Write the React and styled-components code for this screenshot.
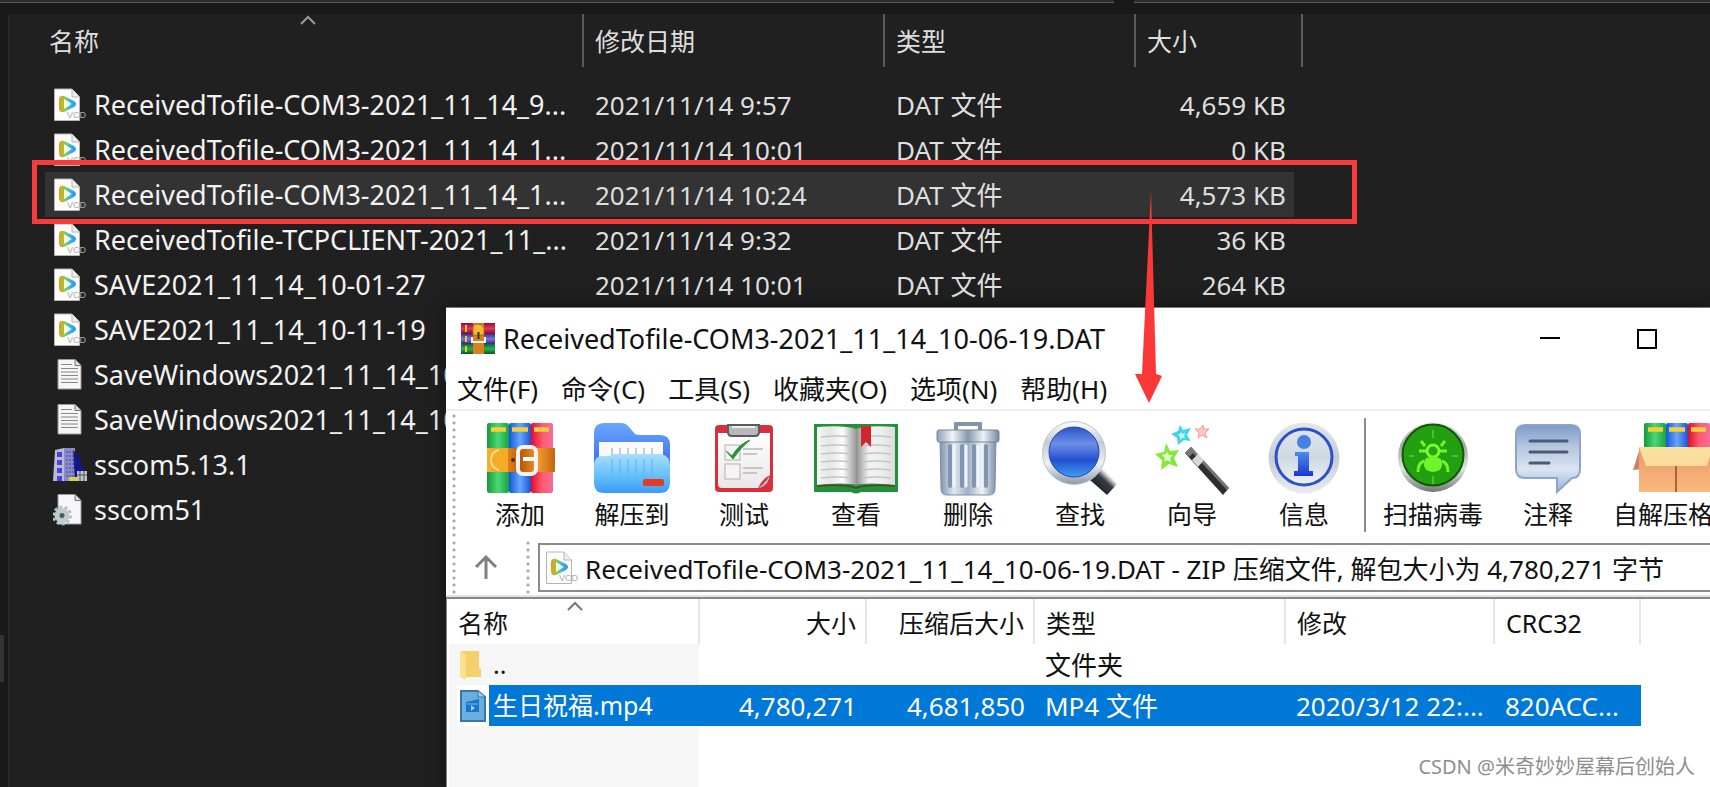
import React from 'react';
import styled, { createGlobalStyle } from 'styled-components';

const GlobalStyle = createGlobalStyle`
  * {
    box-sizing: border-box;
  }
  body {
    margin: 0;
    background: #191919;
    font-family: 'Noto Sans', 'Noto Sans CJK SC', sans-serif;
    font-size: 25px;
  }
  button, input {
    font: inherit;
    color: inherit;
    border: 0;
    padding: 0;
    margin: 0;
    background: none;
  }
`;

const Desktop = styled.div`
  position: relative;
  display: flex;
  flex-direction: column;
  min-height: 100vh;
  overflow: hidden;
`;

/* ---------- file explorer ---------- */

const TopStrip = styled.div`
  display: flex;
  gap: 20px;
  height: 14px;
`;

const TopField = styled.div`
  height: 3px;
  background: #2d2d2d;
  border-bottom: 1px solid #5a5a5a;
  flex: ${(props) => props.$grow};
`;

const ExplorerBody = styled.div`
  display: flex;
  flex: 1;
`;

const NavGutter = styled.div`
  display: flex;
  flex-direction: column;
  justify-content: flex-end;
  width: 9px;
  border-right: 1px solid #2b2b2b;
  padding-bottom: 105px;
`;

const NavThumb = styled.div`
  width: 4px;
  height: 47px;
  background: #333;
`;

const ExplorerPane = styled.main`
  flex: 1;
  background: #202020;
  padding-left: 36px;
`;

const ExplorerTable = styled.table`
  width: 1258px;
  table-layout: fixed;
  border-collapse: separate;
  border-spacing: 0;
  color: #dedede;
  line-height: 34px;
`;

const ExplorerHead = styled.th`
  position: relative;
  width: ${(props) => props.$width}px;
  height: 53px;
  padding: 0 0 0 ${(props) => props.$indent || 11}px;
  border-right: 2px solid #5b5b5b;
  font-weight: 400;
  text-align: left;
  white-space: nowrap;
`;

const SortMark = styled.svg`
  position: absolute;
  top: ${(props) => props.$top}px;
  left: 50%;
  margin-left: ${(props) => props.$shift || 0}px;
`;

const ExplorerSpacer = styled.tr`
  height: 15px;
`;

const ExplorerRow = styled.tr`
  height: 45px;
  td {
    background: ${(props) => (props.$selected ? '#333' : 'transparent')};
    background-clip: padding-box;
  }
  td:last-child {
    border-right: 9px solid transparent;
  }
`;

const ExplorerCell = styled.td`
  padding: 0 ${(props) => (props.$right ? 8 : 0)}px 0 11px;
  font-size: 26px;
  text-align: ${(props) => (props.$right ? 'right' : 'left')};
  white-space: nowrap;
  overflow: hidden;
`;

const NameCell = styled(ExplorerCell)`
  padding-left: 8px;
  font-size: 27px;
  color: #f2f2f2;
`;

const NameLine = styled.div`
  display: flex;
  align-items: center;
  gap: 7px;
`;

/* ---------- archive window ---------- */

const ArchiveWindow = styled.section`
  position: absolute;
  top: 307px;
  left: 446px;
  right: 0;
  bottom: 0;
  display: flex;
  flex-direction: column;
  background: #fff;
  color: #111;
  border-top: 1px solid #777;
  box-shadow: 0 0 16px rgba(0, 0, 0, 0.5);
  overflow: hidden;
`;

const TitleBar = styled.header`
  display: flex;
  align-items: center;
  height: 61px;
  padding: 0 15px;
  gap: 8px;
`;

const TitleText = styled.h1`
  flex: 1;
  margin: 0;
  font-size: 27px;
  font-weight: 400;
  white-space: nowrap;
`;

const WindowButtons = styled.div`
  display: flex;
`;

const WindowButton = styled.button`
  display: flex;
  align-items: center;
  justify-content: center;
  width: 97px;
  height: 60px;
`;

const MenuBar = styled.nav`
  display: flex;
  gap: 23px;
  height: 42px;
  padding: 0 11px;
  border-bottom: 2px solid #eee;
`;

const MenuButton = styled.button`
  line-height: 40px;
  font-size: 26px;
  white-space: nowrap;
`;

const ToolBar = styled.div`
  display: flex;
  height: 127px;
  padding-left: 6px;
`;

const Grip = styled.div`
  flex: none;
  width: 4px;
  margin-top: 3px;
  background: radial-gradient(circle at 2px 2px, #aaa 1px, transparent 2px) 0 0 / 4px 7px;
`;

const ToolButtons = styled.div`
  display: flex;
  padding-left: 8px;
`;

const ToolButton = styled.button`
  display: flex;
  flex-direction: column;
  align-items: center;
  flex: none;
  min-width: 112px;
  padding: 10px 9px 0;
  line-height: 34px;
  white-space: nowrap;
  svg {
    display: block;
  }
`;

const ToolDivider = styled.div`
  flex: none;
  width: 2px;
  height: 114px;
  margin: 7px 8px 0 4px;
  background: #8c8c8c;
`;

const AddressBar = styled.div`
  display: flex;
  height: 59px;
  padding-left: 6px;
  border-bottom: 2px solid #e3e3e3;
`;

const UpButton = styled.button`
  display: flex;
  align-items: center;
  justify-content: center;
  width: 70px;
  padding-right: 10px;
`;

const AddressBox = styled.div`
  display: flex;
  align-items: center;
  flex: 1;
  height: 49px;
  margin: 5px 0 0 8px;
  padding-left: 5px;
  gap: 6px;
  border: 2px solid #8a8a8a;
  border-right: 0;
`;

const AddressInput = styled.input`
  flex: 1;
  min-width: 0;
  font-size: 26px;
`;

const ListPane = styled.div`
  flex: 1;
  border-top: 2px solid #828790;
  border-left: 1px solid #828790;
  background: linear-gradient(#f6f6f6, #f6f6f6) 2px 45px / 250px 100% no-repeat;
`;

const ListTable = styled.table`
  width: 1194px;
  table-layout: fixed;
  border-collapse: separate;
  border-spacing: 0;
  line-height: 34px;
`;

const ListHead = styled.th`
  position: relative;
  width: ${(props) => props.$width}px;
  height: 45px;
  padding: 3px 9px 0 11px;
  border-right: 2px solid #e5e5e5;
  font-weight: 400;
  text-align: ${(props) => (props.$right ? 'right' : 'left')};
  white-space: nowrap;
`;

const ListRow = styled.tr`
  height: 41px;
  color: ${(props) => (props.$selected ? '#fff' : '#111')};
  td {
    background: ${(props) => (props.$selected ? '#0078d7' : 'transparent')};
  }
  td:first-child {
    background: none;
  }
`;

const ListCell = styled.td`
  padding: 0 10px 0 10px;
  font-size: 26px;
  text-align: ${(props) => (props.$right ? 'right' : 'left')};
  white-space: nowrap;
`;

const ListNameCell = styled.td`
  padding: 0 0 0 10px;
`;

const ListName = styled.div`
  display: flex;
`;

const ListIcon = styled.span`
  display: flex;
  align-items: center;
  width: 32px;
  height: 41px;
  padding-left: 3px;
  background: ${(props) => (props.$selected ? '#fff' : 'transparent')};
`;

const ListLabel = styled.span`
  flex: 1;
  padding: 3px 0 4px 4px;
  background: ${(props) => (props.$selected ? '#0078d7' : 'transparent')};
`;

/* ---------- annotations ---------- */

const RedFrame = styled.div`
  position: absolute;
  top: 160px;
  left: 32px;
  width: 1325px;
  height: 64px;
  border: 5px solid #fa3b3b;
  pointer-events: none;
`;

const RedArrow = styled.svg`
  position: absolute;
  top: 188px;
  left: 1134px;
  pointer-events: none;
`;

const Watermark = styled.div`
  position: absolute;
  right: 15px;
  bottom: 4px;
  font-size: 20px;
  line-height: 32px;
  color: #8e8e8e;
  text-shadow: 1px 1px 0 #fff;
`;

/* ---------- icons ---------- */

const Gradient = ({ id, stops, flat }) => (
  <linearGradient id={id} x1="0" y1="0" x2={flat ? 1 : 0} y2={flat ? 0 : 1}>
    {stops.map((color, i) => (
      <stop key={i} offset={i / (stops.length - 1)} stopColor={color} />
    ))}
  </linearGradient>
);

const VideoFileIcon = () => (
  <svg width="34" height="34" viewBox="0 0 34 34">
    <defs>
      <Gradient id="playGrad" flat stops={['#f7941e', '#8bd03c', '#35b4f0', '#2f8fe8']} />
    </defs>
    <path d="M1.500 1h17.500l7.500 8v23.500H1.500z" fill="#fcfcfc" stroke="#b5b5b5" />
    <path d="M19 1v8h7.500" fill="#eee" stroke="#b5b5b5" />
    <path d="M6 12q0-5 5-4l10 5q4 3 0 6l-10 5q-5 1-5-4z" fill="url(#playGrad)" />
    <path d="M11 12q0-1 1-.5l6 4q1 .5 0 1l-6 4q-1 .5-1-.5z" fill="#f3fbe4" />
    <text x="14" y="30" fontSize="9" fontFamily="Liberation Sans" fill="#aaa">VCD</text>
  </svg>
);

const TextFileIcon = () => (
  <svg width="34" height="34" viewBox="0 0 34 34">
    <path d="M5 1.500h17l6 6v23.500H5z" fill="#f5f5f5" stroke="#9a9a9a" />
    <path d="M22 1.500v6h6" fill="#ddd" stroke="#777" />
    <path d="M8 6.500h11M8 10.500h17M8 14h17M8 17.500h17M8 21h17M8 24.500h17" stroke="#888" strokeWidth="1.200" />
  </svg>
);

const BuildingIcon = () => (
  <svg width="34" height="34" viewBox="0 0 34 34">
    <path d="M2 2l9-2v33H0z" fill="#b9b9d8" />
    <path d="M11 0h11v33H11z" fill="#8a8acb" />
    <path d="M20 2l3 3v6l3-5 2 10 5 8v9H22z" fill="#15158c" />
    <path d="M4 4h5v5H4zM4 12h5v5H4zM4 20h5v5H4zM4 28h5v5H4z" fill="#4a3fe0" />
    <path d="M14 3v28M17 3v28M20 3v28" stroke="#42429c" strokeDasharray="2 2" />
    <path d="M16 29h8v4h-8z" fill="#d8d23c" />
    <path d="M24 23h10v10H24z" fill="#c4c4c4" />
    <path d="M27 23v10M31 23v10M24 27h10" stroke="#555" />
  </svg>
);

const GearFileIcon = () => (
  <svg width="34" height="34" viewBox="0 0 34 34">
    <path d="M5 1.500h17l6 6v23.500H5z" fill="#f7f7f9" stroke="#9a9a9a" />
    <path d="M22 1.500v6h6" fill="#ddd" stroke="#777" />
    <circle cx="9" cy="22.500" r="8.500" fill="none" stroke="#b4c1c7" strokeWidth="3" strokeDasharray="3 2.300" />
    <circle cx="9" cy="22.500" r="5" fill="#4c5a60" stroke="#c0cbd0" strokeWidth="5" />
  </svg>
);

const AppIcon = () => (
  <svg width="34" height="32" viewBox="0 0 34 32">
    <defs>
      <Gradient id="bookR" stops={['#8e1038', '#e2365f', '#7c0d2d']} />
      <Gradient id="bookB" stops={['#3a3390', '#7a76d8', '#332c80']} />
      <Gradient id="bookG" stops={['#0c6b2c', '#2fae55', '#0a5222']} />
    </defs>
    <rect width="34" height="11" fill="url(#bookR)" />
    <rect y="11" width="34" height="10" fill="url(#bookB)" />
    <rect y="21" width="34" height="10" fill="url(#bookG)" />
    <path d="M5 2v7M5 13v6M5 23v6" stroke="#f0c62e" strokeWidth="2" />
    <rect x="12" width="11" height="31" fill="#d9801d" />
    <path d="M12 12V5q0-4 5-4t6 4v7z" fill="#f7b933" stroke="#b8690f" />
    <path d="M11 14v5h13v-5" fill="none" stroke="#f4f4f4" strokeWidth="2" />
    <path d="M17.500 9v7" stroke="#333" strokeWidth="2" />
  </svg>
);

const BookSpines = ({ x, height, prefix }) => (
  <g transform={`translate(${x} 2)`}>
    <defs>
      <Gradient id={`${prefix}g`} flat stops={['#149a3a', '#4bd873', '#18a244']} />
      <Gradient id={`${prefix}b`} flat stops={['#1457d8', '#67a5ff', '#1d53d4']} />
      <Gradient id={`${prefix}r`} flat stops={['#e00d2b', '#ff5a6e', '#f56c9c']} />
    </defs>
    <rect width="22" height={height} rx="2" fill={`url(#${prefix}g)`} />
    <rect x="22" width="22" height={height} rx="2" fill={`url(#${prefix}b)`} />
    <rect x="44" width="22" height={height} rx="2" fill={`url(#${prefix}r)`} />
    <path d="M4 6.500h15M25 6.500h16M47 6.500h15" stroke="#f8cf3a" strokeWidth="4.500" />
  </g>
);

const AddIcon = () => (
  <svg width="72" height="76" viewBox="0 0 72 76">
    <defs>
      <Gradient id="belt" flat stops={['#f6b62c', '#f08a1c', '#b95a0a', '#f39a2c', '#c4640e']} />
    </defs>
    <BookSpines x={3} height={70} prefix="add" />
    <rect x="3" y="27" width="68" height="24" rx="1" fill="url(#belt)" />
    <path d="M24 27H13q-10 1-10 12t10 12h11z" fill="#f5ab27" />
    <path d="M15 29q-8 2-8 10t8 10" fill="none" stroke="#fde08a" strokeWidth="2" />
    <circle cx="29" cy="39" r="2" fill="#54290a" />
    <rect x="34" y="26" width="18" height="27" rx="5" fill="none" stroke="#f3f3f5" strokeWidth="4" />
    <path d="M39 38h11" stroke="#fff" strokeWidth="4" />
  </svg>
);

const ExtractIcon = () => (
  <svg width="76" height="76" viewBox="0 0 76 76">
    <defs>
      <Gradient id="folderBack" stops={['#6aa7ff', '#2f5fe8']} />
      <Gradient id="folderFront" stops={['#a9defd', '#6cc3fb', '#3b9bf6']} />
    </defs>
    <path d="M0 12Q0 2 10 2h17q5 0 8 4l6 7q2 1 5 1h20q10 0 10 10v32H0z" fill="url(#folderBack)" />
    <path d="M5 21h64v25H5z" fill="#fafafa" />
    <path d="M18 27v12M26 27v12M34 27v12M42 27v12M50 27v12M58 27v12" stroke="#c5cad4" strokeWidth="2" />
    <path d="M0 44q0-9 9-9h5q3 0 6-2h47q9 2 9 11v18q0 10-10 10H10Q0 72 0 62z" fill="url(#folderFront)" />
    <path d="M18 38v24M26 38v24M34 38v24M42 38v24M50 38v18M58 38v18" stroke="#5db3f2" strokeOpacity="0.500" strokeWidth="2" />
    <rect x="49" y="58" width="21" height="7" rx="2" fill="#e23b20" />
  </svg>
);

const TestIcon = () => (
  <svg width="60" height="76" viewBox="0 0 60 76">
    <defs>
      <Gradient id="sheet" stops={['#ffffff', '#e8e8ea']} />
    </defs>
    <rect x="1" y="4" width="58" height="67" rx="4" fill="#d8303a" />
    <path d="M4 12h52v42q-8 4-12 13H8q-4 0-4-4z" fill="url(#sheet)" />
    <path d="M56 54q-2 12-12 13 8-5 12-13z" fill="#bfbfc3" />
    <path d="M14 4h31v7q0 4-4 4H18q-4 0-4-4z" fill="#b9b9bb" stroke="#5b5b5d" strokeWidth="2" />
    <path d="M18 6h23" stroke="#eee" strokeWidth="2" />
    <rect x="11" y="24" width="15" height="15" fill="#f4f4f4" stroke="#b5aead" />
    <rect x="11" y="43" width="15" height="15" fill="#f4f4f4" stroke="#b5aead" />
    <path d="M12 30l6 5Q25 23 36 19 26 27 19 38z" fill="#2b8f3c" stroke="#2b8f3c" />
    <path d="M29 28h20M29 33h14M29 47h20M29 52h14" stroke="#bdb6b5" strokeWidth="1.500" />
  </svg>
);

const ViewIcon = () => (
  <svg width="86" height="76" viewBox="0 0 86 76">
    <defs>
      <Gradient id="pageL" flat stops={['#f6f6f6', '#e6e6e6', '#fbfbfb', '#9b9b9b']} />
      <Gradient id="pageR" flat stops={['#8f8f8f', '#f4f4f4', '#ededed', '#dcdcdc']} />
    </defs>
    <path d="M1 3h84v68H48q-5 3-10 0H1z" fill="#23913a" />
    <path d="M4 6q28-2 39 2v56q-12-3-39 0z" fill="url(#pageL)" />
    <path d="M82 6Q54 4 43 8v56q12-3 39 0z" fill="url(#pageR)" />
    <path d="M8 16q16-2 30 0M8 25q16-2 30 0M8 33q16-2 30 0M8 41q16-2 30 0M8 49q16-2 30 0M8 57q16-2 30 0M48 16q16-2 30 0M48 25q16-2 30 0M48 33q16-2 30 0M48 41q16-2 30 0M48 49q16-2 30 0M48 57q16-2 30 0" fill="none" stroke="#c4c4c4" strokeWidth="1.500" />
    <path d="M4 65q28-2 39 2 12-4 39-2" fill="none" stroke="#5d3b33" strokeWidth="1.500" />
    <path d="M48 5h10v21l-5-5-5 5z" fill="#cf2730" />
  </svg>
);

const DeleteIcon = () => (
  <svg width="64" height="76" viewBox="0 0 64 76">
    <defs>
      <Gradient id="binBody" flat stops={['#7f93ac', '#dfe7f1', '#9fb0c6', '#eef3f8', '#7c90aa']} />
      <Gradient id="binLid" flat stops={['#8ca0b8', '#f1f5f9', '#8799b1', '#eef2f7', '#73869f']} />
    </defs>
    <path d="M20 10V3h24v7" fill="none" stroke="#8494a8" strokeWidth="4" />
    <path d="M4 18h56l-1 50q0 6-6 6H11q-6 0-6-6z" fill="url(#binBody)" stroke="#7e8fa5" />
    <path d="M14 25v40M26 25v40M38 25v40M50 25v40" stroke="#8195ae" strokeWidth="4" strokeLinecap="round" />
    <path d="M18 25v40M30 25v40M42 25v40" stroke="#eef3f8" strokeWidth="3" strokeLinecap="round" />
    <rect x="1" y="9" width="62" height="12" rx="2" fill="url(#binLid)" stroke="#73849a" />
  </svg>
);

const FindIcon = () => (
  <svg width="78" height="76" viewBox="0 0 78 76">
    <defs>
      <Gradient id="lens" stops={['#2a55c8', '#6d8ee6', '#2450d0', '#3f9df3']} />
      <Gradient id="lensRing" stops={['#ffffff', '#c3cbd4', '#eef1f4', '#8d98a4']} />
      <linearGradient id="handle" x1="0" y1="1" x2="1" y2="0">
        <stop offset="0.200" stopColor="#1c1c22" />
        <stop offset="0.550" stopColor="#3a3a42" />
        <stop offset="0.700" stopColor="#d9d9de" />
        <stop offset="0.850" stopColor="#26262c" />
      </linearGradient>
    </defs>
    <path d="M49 59l12-11 15 15-10 11z" fill="url(#handle)" />
    <circle cx="33" cy="32" r="31.500" fill="url(#lensRing)" stroke="#bcc4cd" />
    <circle cx="33" cy="31" r="25" fill="url(#lens)" stroke="#2448a5" />
  </svg>
);

const WizardIcon = () => (
  <svg width="76" height="76" viewBox="0 0 76 76">
    <path d="M31 32l6-6 38 41-6 7z" fill="#2e2e2e" />
    <path d="M35 28l2-2 38 41-2 2z" fill="#777" />
    <path d="M31 32l6-6 4 4-6 6z" fill="#777" />
    <path d="M38 39l6-6 6 6-6 7z" fill="#d8d8d8" />
    <path d="M12 22l4 8 9-1-5 8 4 9-9-3-8 6 1-10-7-6 9-2z" fill="#86e83c" />
    <path d="M13 31l2 3 4 0-3 3 1 4-4-2-3 2 1-4-3-3 4-1z" fill="#e6ffd0" />
    <path d="M26 4l3 5 8-2-4 7 4 6-7-1-6 5-1-7-6-4 7-3z" fill="#3fd5ea" />
    <path d="M27 11l1 2 3-1-1 3 1 2-3 0-2 2v-3l-2-2 2-1z" fill="#d5fbff" />
    <path d="M49 4l1 4 5 0-4 4 2 5-5-3-4 3 1-5-4-4 5 0z" fill="#ffc9c9" stroke="#f29a9a" />
  </svg>
);

const InfoIcon = () => (
  <svg width="72" height="76" viewBox="0 0 72 76">
    <defs>
      <Gradient id="infoRing" stops={['#e4e7eb', '#c4ccd6', '#e9edf1']} />
      <Gradient id="infoFill" stops={['#dfe5ec', '#cfd8e2', '#eef2f6']} />
      <Gradient id="infoGlyph" stops={['#4c8bea', '#1f36d6']} />
    </defs>
    <circle cx="36" cy="37" r="35.500" fill="url(#infoRing)" />
    <circle cx="36" cy="36" r="28" fill="url(#infoFill)" stroke="#2b51c4" strokeWidth="3" />
    <circle cx="36" cy="21" r="7" fill="#477fe6" />
    <path d="M27 31h14v19h4v5H26v-5h4V35h-3z" fill="url(#infoGlyph)" />
  </svg>
);

const VirusIcon = () => (
  <svg width="72" height="76" viewBox="0 0 72 76">
    <defs>
      <Gradient id="virusRing" stops={['#eef0ee', '#9fa6a0', '#e2e5e2', '#717872']} />
    </defs>
    <circle cx="36" cy="36" r="35" fill="url(#virusRing)" />
    <circle cx="36" cy="34" r="30.500" fill="#22a010" stroke="#13570c" strokeWidth="2" />
    <path d="M36 9v8M36 55v8M12 35h5M55 35h6" stroke="#5cc93c" strokeWidth="1.500" />
    <circle cx="36" cy="30" r="6" fill="#29a514" stroke="#7dfb2c" strokeWidth="3" />
    <path d="M28 38q8-5 16 0 4 12-8 13-12-1-8-13z" fill="#6ff62b" />
    <path d="M28 25l-4-5M44 25l4-5M29 30h-7M43 30h7M27 40q-6 2-6 11M45 40q6 2 6 11" fill="none" stroke="#6ff62b" strokeWidth="3" />
  </svg>
);

const CommentIcon = () => (
  <svg width="68" height="76" viewBox="0 0 68 76">
    <defs>
      <Gradient id="bubble" stops={['#7d9bc9', '#b7c7e0', '#dbe4f1', '#9db4d6']} />
    </defs>
    <path d="M11 4h46q9 0 9 9v35q0 9-8 9L43 71V57H11q-9 0-9-9V13q0-9 9-9z" fill="url(#bubble)" stroke="#8ca5cc" strokeWidth="2" />
    <path d="M16 20h37M16 31h37M16 42h19" stroke="#4d5a73" strokeWidth="3" strokeLinecap="round" />
  </svg>
);

const SfxIcon = () => (
  <svg width="88" height="76" viewBox="0 0 88 76">
    <defs>
      <Gradient id="boxFront" stops={['#e89a6a', '#fbb97c']} />
      <Gradient id="boxFlap" stops={['#f9e3a0', '#fbd999']} />
    </defs>
    <BookSpines x={12} height={30} prefix="sfx" />
    <path d="M8 27L1 49l9-1zM80 27l7 22-9-1z" fill="#c98263" />
    <path d="M7 26h74v45H7z" fill="url(#boxFront)" />
    <path d="M7 26h74l-6 19H14z" fill="url(#boxFlap)" />
    <path d="M44 45v26" stroke="#a9643f" strokeWidth="2" />
  </svg>
);

const FolderIcon = () => (
  <svg width="22" height="30" viewBox="0 0 22 30">
    <path d="M2 1h17v17l2 1v8H2z" fill="#f3d06c" />
    <path d="M0 1l6 4v25l-6-3z" fill="#fce08e" />
  </svg>
);

const Mp4Icon = () => (
  <svg width="26" height="32" viewBox="0 0 26 32">
    <path d="M1 1h17l7 6v24H1z" fill="#6aaee0" stroke="#3a76a8" strokeWidth="2" />
    <path d="M18 1v6h7" fill="#9fcdf0" stroke="#3a76a8" />
    <path d="M6 12l13-3v13H6z" fill="#1878c8" />
    <path d="M7 14h11" stroke="#7dbcec" />
    <path d="M11 15v6l4-3z" fill="#9fd0f5" />
  </svg>
);

const files = [
  { icon: VideoFileIcon, name: 'ReceivedTofile-COM3-2021_11_14_9...', date: '2021/11/14 9:57', type: 'DAT 文件', size: '4,659 KB' },
  { icon: VideoFileIcon, name: 'ReceivedTofile-COM3-2021_11_14_1...', date: '2021/11/14 10:01', type: 'DAT 文件', size: '0 KB' },
  { icon: VideoFileIcon, name: 'ReceivedTofile-COM3-2021_11_14_1...', date: '2021/11/14 10:24', type: 'DAT 文件', size: '4,573 KB', selected: true },
  { icon: VideoFileIcon, name: 'ReceivedTofile-TCPCLIENT-2021_11_...', date: '2021/11/14 9:32', type: 'DAT 文件', size: '36 KB' },
  { icon: VideoFileIcon, name: 'SAVE2021_11_14_10-01-27', date: '2021/11/14 10:01', type: 'DAT 文件', size: '264 KB' },
  { icon: VideoFileIcon, name: 'SAVE2021_11_14_10-11-19' },
  { icon: TextFileIcon, name: 'SaveWindows2021_11_14_10' },
  { icon: TextFileIcon, name: 'SaveWindows2021_11_14_10' },
  { icon: BuildingIcon, name: 'sscom5.13.1' },
  { icon: GearFileIcon, name: 'sscom51' },
];

const menus = ['文件(F)', '命令(C)', '工具(S)', '收藏夹(O)', '选项(N)', '帮助(H)'];

const tools = [
  { icon: AddIcon, label: '添加' },
  { icon: ExtractIcon, label: '解压到' },
  { icon: TestIcon, label: '测试' },
  { icon: ViewIcon, label: '查看' },
  { icon: DeleteIcon, label: '删除' },
  { icon: FindIcon, label: '查找' },
  { icon: WizardIcon, label: '向导' },
  { icon: InfoIcon, label: '信息' },
  { icon: VirusIcon, label: '扫描病毒', divided: true },
  { icon: CommentIcon, label: '注释' },
  { icon: SfxIcon, label: '自解压格式' },
];

const entries = [
  { icon: FolderIcon, name: '..', size: '', packed: '', type: '文件夹', date: '', crc: '' },
  { icon: Mp4Icon, name: '生日祝福.mp4', size: '4,780,271', packed: '4,681,850', type: 'MP4 文件', date: '2020/3/12 22:...', crc: '820ACC...', selected: true },
];

function Explorer() {
  return (
    <ExplorerPane>
      <ExplorerTable>
        <thead>
          <tr>
            <ExplorerHead $width={539} $indent={4}>
              名称
              <SortMark $top={1} $shift={-14} width="16" height="10" viewBox="0 0 16 10">
                <path d="M1 9l7-7 7 7" fill="none" stroke="#9a9a9a" strokeWidth="2" />
              </SortMark>
            </ExplorerHead>
            <ExplorerHead $width={301}>修改日期</ExplorerHead>
            <ExplorerHead $width={251}>类型</ExplorerHead>
            <ExplorerHead $width={167}>大小</ExplorerHead>
          </tr>
        </thead>
        <tbody>
          <ExplorerSpacer />
          {files.map((file, i) => (
            <ExplorerRow key={i} $selected={file.selected}>
              <NameCell>
                <NameLine>
                  <file.icon />
                  {file.name}
                </NameLine>
              </NameCell>
              <ExplorerCell>{file.date}</ExplorerCell>
              <ExplorerCell>{file.type}</ExplorerCell>
              <ExplorerCell $right>{file.size}</ExplorerCell>
            </ExplorerRow>
          ))}
        </tbody>
      </ExplorerTable>
    </ExplorerPane>
  );
}

function Archive() {
  return (
    <ArchiveWindow>
      <TitleBar>
        <AppIcon />
        <TitleText>ReceivedTofile-COM3-2021_11_14_10-06-19.DAT</TitleText>
        <WindowButtons>
          <WindowButton aria-label="最小化">
            <svg width="22" height="22" viewBox="0 0 22 22">
              <path d="M1 10h20" stroke="#000" strokeWidth="2" />
            </svg>
          </WindowButton>
          <WindowButton aria-label="最大化">
            <svg width="22" height="22" viewBox="0 0 22 22">
              <path d="M2 2h18v18H2z" fill="none" stroke="#000" strokeWidth="2" />
            </svg>
          </WindowButton>
        </WindowButtons>
      </TitleBar>
      <MenuBar>
        {menus.map((menu) => (
          <MenuButton key={menu}>{menu}</MenuButton>
        ))}
      </MenuBar>
      <ToolBar>
        <Grip />
        <ToolButtons>
          {tools.map((tool) => (
            <React.Fragment key={tool.label}>
              {tool.divided && <ToolDivider />}
              <ToolButton>
                <tool.icon />
                {tool.label}
              </ToolButton>
            </React.Fragment>
          ))}
        </ToolButtons>
      </ToolBar>
      <AddressBar>
        <Grip />
        <UpButton aria-label="向上">
          <svg width="24" height="26" viewBox="0 0 24 26">
            <path d="M12 25V3M2 13L12 3l10 10" fill="none" stroke="#808080" strokeWidth="3" />
          </svg>
        </UpButton>
        <Grip />
        <AddressBox>
          <VideoFileIcon />
          <AddressInput
            aria-label="地址"
            readOnly
            value="ReceivedTofile-COM3-2021_11_14_10-06-19.DAT - ZIP 压缩文件, 解包大小为 4,780,271 字节"
          />
        </AddressBox>
      </AddressBar>
      <ListPane>
        <ListTable>
          <thead>
            <tr>
              <ListHead $width={253}>
                名称
                <SortMark $top={2} $shift={-6} width="16" height="10" viewBox="0 0 16 10">
                  <path d="M1 9l7-7 7 7" fill="none" stroke="#777" strokeWidth="2" />
                </SortMark>
              </ListHead>
              <ListHead $width={167} $right>大小</ListHead>
              <ListHead $width={168} $right>压缩后大小</ListHead>
              <ListHead $width={251}>类型</ListHead>
              <ListHead $width={209}>修改</ListHead>
              <ListHead $width={146}>CRC32</ListHead>
            </tr>
          </thead>
          <tbody>
            {entries.map((entry) => (
              <ListRow key={entry.name} $selected={entry.selected}>
                <ListNameCell>
                  <ListName>
                    <ListIcon $selected={entry.selected}>
                      <entry.icon />
                    </ListIcon>
                    <ListLabel $selected={entry.selected}>{entry.name}</ListLabel>
                  </ListName>
                </ListNameCell>
                <ListCell $right>{entry.size}</ListCell>
                <ListCell $right>{entry.packed}</ListCell>
                <ListCell>{entry.type}</ListCell>
                <ListCell>{entry.date}</ListCell>
                <ListCell>{entry.crc}</ListCell>
              </ListRow>
            ))}
          </tbody>
        </ListTable>
      </ListPane>
    </ArchiveWindow>
  );
}

function App() {
  return (
    <Desktop>
      <GlobalStyle />
      <TopStrip>
        <TopField $grow={1114} />
        <TopField $grow={576} />
      </TopStrip>
      <ExplorerBody>
        <NavGutter>
          <NavThumb />
        </NavGutter>
        <Explorer />
      </ExplorerBody>
      <Archive />
      <RedFrame />
      <RedArrow width="30" height="216" viewBox="0 0 30 216">
        <path d="M17 2l5 184 6 2-13 27L1 186l7 0z" fill="#fa3838" />
      </RedArrow>
      <Watermark>CSDN @米奇妙妙屋幕后创始人</Watermark>
    </Desktop>
  );
}

export default App;
